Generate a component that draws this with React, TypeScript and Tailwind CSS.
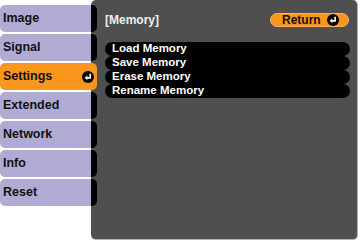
const tabs = ["Image", "Signal", "Settings", "Extended", "Network", "Info", "Reset"];
const items = ["Load Memory", "Save Memory", "Erase Memory", "Rename Memory"];

const EnterIcon = () => (
  <svg width="12" height="12" viewBox="0 0 12 12" className="shrink-0">
    <circle cx="6" cy="6" r="6" fill="#000" />
    <path d="M8.2 2.8 V6.8 H5" stroke="#fff" strokeWidth="1.7" fill="none" />
    <path d="M2.6 6.8 L5.4 4.4 L5.4 9.2 Z" fill="#fff" />
  </svg>
);

export default function App() {
  return (
    <div className="w-[360px] h-[241px] bg-white flex font-['Liberation_Sans',Arial,sans-serif] font-bold overflow-hidden">
      <div className="w-[91px] shrink-0 flex flex-col gap-[2px] pt-[5px]">
        {tabs.map((t) =>
          t === "Settings" ? (
            <div
              key={t}
              className="relative z-10 w-[97px] h-[27px] bg-[#f8961e] rounded-[5px] flex items-center justify-between pl-[3px] pr-[3px] text-[12.5px] text-[#111]"
            >
              <span>{t}</span>
              <EnterIcon />
            </div>
          ) : (
            <div
              key={t}
              className="h-[27px] bg-[#b0abd2] rounded-l-[5px] flex items-center pl-[3px] text-[12.5px] text-[#111]"
            >
              {t}
            </div>
          )
        )}
      </div>
      <div className="w-[267px] h-[240px] bg-[#4f4f4f] rounded-[5px] border-r border-b border-[#b5b5b5] flex">
        <div className="w-[6px] shrink-0 flex flex-col gap-[2px] pt-[5px]">
          {tabs.map((t) => (
            <div
              key={t}
              className={t === "Settings" ? "h-[27px]" : "h-[27px] bg-black rounded-r-[5px]"}
            />
          ))}
        </div>
        <div className="flex-1 flex flex-col pl-[8px] pr-[7px] pt-[13px]">
          <div className="flex items-center justify-between h-[14px] pr-[1px]">
            <span className="text-[12px] text-[#eeeeee]">[Memory]</span>
            <div className="w-[79px] h-[14px] bg-[#f8961e] border border-[#fbb45a] rounded-full flex items-center pl-[11px] pr-[9px] justify-between text-[12px] text-[#111]">
              <span>Return</span>
              <EnterIcon />
            </div>
          </div>
          <div className="mt-[15px] flex flex-col">
            {items.map((i) => (
              <div
                key={i}
                className="h-[14px] bg-black rounded-full flex items-center pl-[7px] text-[11.5px] text-white"
              >
                {i}
              </div>
            ))}
          </div>
        </div>
      </div>
    </div>
  );
}
